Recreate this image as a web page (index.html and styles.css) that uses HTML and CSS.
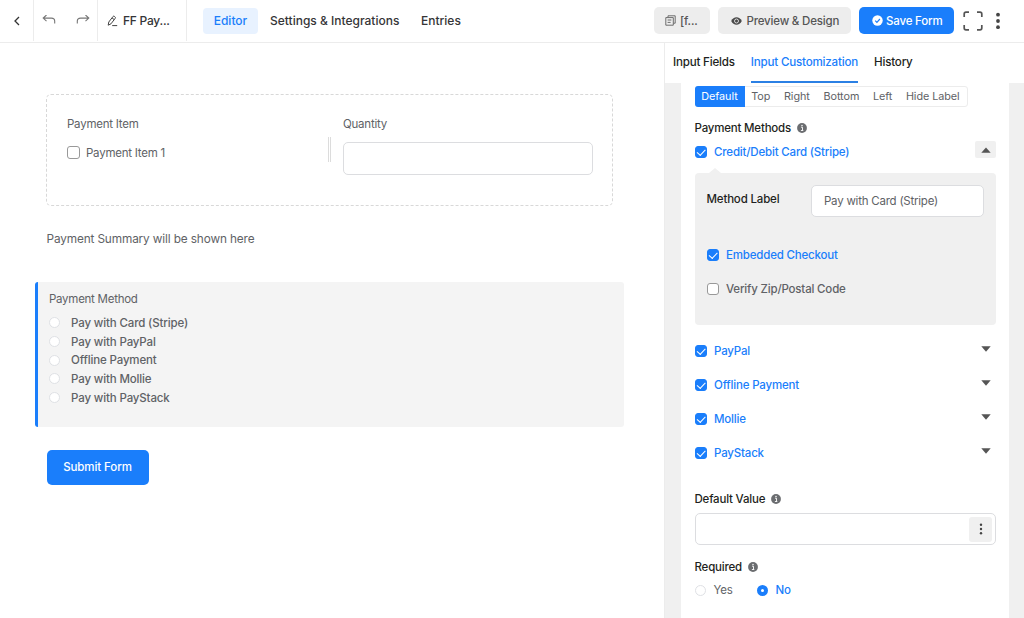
FILE: index.html
```html
<!DOCTYPE html>
<html lang="en">
<head>
<meta charset="utf-8">
<title>Form Editor</title>
<link rel="stylesheet" href="styles.css">
</head>
<body>
<svg class="defs" width="0" height="0">
  <symbol id="info" viewBox="0 0 10 10"><circle cx="5" cy="5" r="4.9" fill="#6b6d70"/><path d="M4 4.2h1.5v3.2M3.9 7.5h2.4" stroke="#fff" stroke-width=".9" fill="none"/><circle cx="5" cy="2.5" r=".75" fill="#fff"/></symbol>
  <symbol id="down" viewBox="0 0 10 6"><path d="M.3.2h9.4L5 5.8z" fill="#555"/></symbol>
</svg>
<header class="topbar">
  <div class="cell back"><svg width="8" height="12" viewBox="0 0 8 12"><path d="M6 2 2 6l4 4" fill="none" stroke="#333" stroke-width="1.3"/></svg></div>
  <div class="cell history">
    <svg width="14" height="11" viewBox="0 0 14 11"><path d="M4.5 0 1.2 3.1l3.3 3.1M1.4 3.1h8q3.3 0 3.3 3V8.500" fill="none" stroke="#777" stroke-width="1.1"/></svg>
    <svg width="14" height="11" viewBox="0 0 14 11"><path d="m9.5 0 3.3 3.1-3.3 3.1M12.6 3.1h-8q-3.3 0-3.3 3V8.500" fill="none" stroke="#777" stroke-width="1.1"/></svg>
  </div>
  <div class="cell name">
    <svg width="11" height="12" viewBox="0 0 11 12"><path d="M1.2 10.2 1.8 7 6 1.5q.6-.7 1.4-.1l.6.5q.8.6.2 1.4L4 8.8zM5 2.9l2.2 1.7M5.2 10.6h5" fill="none" stroke="#444" stroke-width="1"/></svg>
    <span>FF Pay...</span>
  </div>
  <nav class="nav"><a class="editor">Editor</a><a class="settings">Settings &amp; Integrations</a><a>Entries</a></nav>
  <div class="actions">
    <div class="btn code"><svg width="11" height="11" viewBox="0 0 11 11"><path d="M3 2.3V.8h7.2v7.4H8.5M.8 2.6h7.5v7.6H.8zM2.6 5h3.8M2.6 7.4h3" fill="none" stroke="#666" stroke-width=".95"/></svg><span>[f...</span></div>
    <div class="btn preview"><svg width="11" height="8" viewBox="0 0 11 8"><path d="M.2 4C1.5 1.5 3.3.3 5.5.3S9.5 1.5 10.8 4C9.5 6.5 7.7 7.7 5.5 7.7S1.5 6.5.2 4z" fill="#4a4a4a"/><circle cx="5.5" cy="4" r="2" fill="none" stroke="#e6e6e6" stroke-width=".9"/></svg><span>Preview &amp; Design</span></div>
    <div class="btn save"><svg width="11" height="11" viewBox="0 0 11 11"><circle cx="5.5" cy="5.5" r="5.2" fill="#fff"/><path d="m3.2 5.6 1.7 1.7 3-3.3" fill="none" stroke="#1a7efb" stroke-width="1.2"/></svg><span>Save Form</span></div>
    <svg class="full" width="20" height="20" viewBox="0 0 20 20"><path d="M1.2 6V3q0-1.800 1.800-1.800h3M14 1.200h3q1.800 0 1.800 1.800v3M18.800 14v3q0 1.800-1.800 1.800h-3M6 18.800H3q-1.800 0-1.800-1.800v-3" fill="none" stroke="#555" stroke-width="1.700"/></svg>
    <svg class="more" width="4" height="18" viewBox="0 0 4 18"><g fill="#444"><circle cx="2" cy="2.7" r="1.9"/><circle cx="2" cy="9" r="1.9"/><circle cx="2" cy="15.2" r="1.9"/></g></svg>
  </div>
</header>
<div class="body">
  <main class="canvas">
    <section class="container">
      <div class="col item"><div class="label">Payment Item</div><div class="choice"><i class="box large"></i><span>Payment Item 1</span></div></div>
      <div class="handle"></div>
      <div class="col quantity"><div class="label">Quantity</div><div class="input"></div></div>
    </section>
    <p class="summary">Payment Summary will be shown here</p>
    <section class="method">
      <div class="label">Payment Method</div>
      <div class="option"><i class="radio"></i><span>Pay with Card (Stripe)</span></div>
      <div class="option"><i class="radio"></i><span>Pay with PayPal</span></div>
      <div class="option"><i class="radio"></i><span>Offline Payment</span></div>
      <div class="option"><i class="radio"></i><span>Pay with Mollie</span></div>
      <div class="option"><i class="radio"></i><span>Pay with PayStack</span></div>
    </section>
    <div class="submit">Submit Form</div>
  </main>
  <aside class="sidebar">
    <div class="tabs"><a>Input Fields</a><a class="active">Input Customization</a><a>History</a></div>
    <div class="panel">
      <div class="segmented"><span class="on">Default</span><span>Top</span><span>Right</span><span>Bottom</span><span>Left</span><span>Hide Label</span></div>
      <div class="heading methods">Payment Methods<svg class="info"><use href="#info"/></svg></div>
      <div class="row first"><i class="box checked"></i><span>Credit/Debit Card (Stripe)</span><b class="toggle"><svg width="10" height="6" viewBox="0 0 10 6"><path d="M.3 5.8h9.4L5 .4z" fill="#555"/></svg></b></div>
      <div class="details">
        <div class="field"><label>Method Label</label><div class="text">Pay with Card (Stripe)</div></div>
        <div class="row embedded"><i class="box checked"></i><span>Embedded Checkout</span></div>
        <div class="row verify"><i class="box"></i><span>Verify Zip/Postal Code</span></div>
      </div>
      <div class="row closed"><i class="box checked"></i><span>PayPal</span><svg class="arrow"><use href="#down"/></svg></div>
      <div class="row closed"><i class="box checked"></i><span>Offline Payment</span><svg class="arrow"><use href="#down"/></svg></div>
      <div class="row closed"><i class="box checked"></i><span>Mollie</span><svg class="arrow"><use href="#down"/></svg></div>
      <div class="row closed"><i class="box checked"></i><span>PayStack</span><svg class="arrow"><use href="#down"/></svg></div>
      <div class="heading default">Default Value<svg class="info"><use href="#info"/></svg></div>
      <div class="value"><b><svg width="4" height="12" viewBox="0 0 4 12"><g fill="#444"><circle cx="2" cy="1.8" r="1.2"/><circle cx="2" cy="6" r="1.2"/><circle cx="2" cy="10.2" r="1.2"/></g></svg></b></div>
      <div class="heading required">Required<svg class="info"><use href="#info"/></svg></div>
      <div class="choices"><i class="radio"></i><span class="yes">Yes</span><i class="radio selected"></i><span class="no">No</span></div>
    </div>
  </aside>
</div>
</body>
</html>
```
FILE: styles.css
```css
* { box-sizing: border-box; }
body { margin: 0; width: 1024px; height: 618px; overflow: hidden; background: #fff; color: #606266; font: 400 11.5px/16px Inter, "Liberation Sans", sans-serif; }
svg { display: block; flex: none; }
.defs { position: absolute; }
i, b { display: block; flex: none; }
span, a, p { white-space: nowrap; }
.topbar { display: flex; height: 43px; padding-bottom: 2px; border-bottom: 1px solid #ececec; color: #353537; font-weight: 500; font-size: 12px; }
.cell { display: flex; align-items: center; height: 41px; border-right: 1px solid #ececec; }
.back { width: 34px; padding-left: 13px; }
.history { width: 64px; gap: 20px; padding-left: 8px; }
.name { width: 89px; padding-left: 9px; gap: 5px; letter-spacing: -.25px; }
.nav { display: flex; align-items: center; height: 41px; padding-left: 16px; }
.editor { width: 55px; height: 26px; line-height: 26px; text-align: center; background: #e8f2ff; color: #1a7efb; border-radius: 4px; margin-right: 12px; }
.settings { width: 151px; }
.actions { display: flex; align-items: center; margin-left: auto; height: 41px; padding-right: 24px; }
.btn { display: flex; align-items: center; height: 27px; border-radius: 5px; background: #ededed; color: #555; font-size: 11.5px; letter-spacing: -.18px; }
.code { width: 56px; padding-left: 11px; gap: 4px; margin-right: 8px; }
.preview { width: 133px; padding-left: 12.5px; gap: 5px; margin-right: 8px; }
.save { width: 95px; padding-left: 13px; gap: 3px; background: #1a7efb; color: #fff; margin-right: 9px; }
.more { margin-left: 13px; }
.body { display: flex; height: 575px; letter-spacing: -.18px; }
.canvas { width: 664px; padding: 51px 40px 0 35px; }
.container { display: flex; width: 567px; height: 112px; margin-left: 11px; padding: 21px 19px 0 20px; border: 1px dashed #d8d8d8; border-radius: 5px; letter-spacing: -.24px; }
.item { width: 261px; }
.choice { display: flex; align-items: center; gap: 6px; margin-top: 12.5px; }
.box { width: 12px; height: 12px; border: 1px solid #999; border-radius: 3px; background: #fff; }
.box.large { width: 13px; height: 13px; }
.handle { width: 3px; height: 25px; margin: 21px 12px 0 0; border: solid #dcdcdc; border-width: 0 1px; }
.quantity { width: 250px; }
.input { height: 33px; margin-top: 10px; border: 1px solid #dcdde0; border-radius: 5px; }
.summary { margin: 24.5px 0 0 11.5px; font-size: 11.8px; letter-spacing: -.13px; }
.method { width: 589px; height: 145px; margin-top: 35.5px; padding: 9px 11px 0; background: #f4f4f4; border-left: 3px solid #1a7efb; border-radius: 3px; }
.method .label { margin-bottom: 6.5px; letter-spacing: -.26px; }
.option { display: flex; align-items: center; height: 18.7px; gap: 11px; font-weight: 500; letter-spacing: -.14px; }
.radio { width: 11px; height: 11px; border: 1px solid #dfe1e5; border-radius: 50%; background: #fff; }
.submit { width: 102px; height: 35px; margin: 23px 0 0 11.5px; background: #1a7efb; border-radius: 5px; color: #fff; font-weight: 500; line-height: 35px; text-align: center; letter-spacing: -.1px; }
.sidebar { width: 360px; background: #f0f0f0; border-left: 1px solid #ececec; }
.tabs { display: flex; height: 40px; gap: 16px; padding-left: 8px; background: #fff; color: #1e1f21; font-weight: 500; font-size: 11.6px; letter-spacing: -.2px; line-height: 38px; }
.tabs .active { color: #1a7efb; border-bottom: 2px solid #2b80e4; }
.panel { width: 328px; height: 535px; margin-left: 16px; padding: 3px 13px 0 13.5px; background: #fff; }
.segmented { display: flex; width: 273px; height: 21px; border: 1px solid #ececec; border-radius: 3px; font-size: 10.8px; line-height: 19px; letter-spacing: -.05px; }
.segmented span { flex: auto; text-align: center; }
.segmented .on { flex: none; width: 50px; height: 21px; line-height: 21px; margin: -1px 0 0 -1px; background: #1a7efb; color: #fff; border-radius: 3px 0 0 3px; }
.heading { display: flex; align-items: center; color: #1e1f21; font-weight: 500; height: 16px; letter-spacing: -.2px; }
.info { width: 10px; height: 10px; margin-left: 6px; }
.methods { margin-top: 13px; }
.row { display: flex; align-items: center; gap: 7.5px; color: #1a7efb; font-weight: 500; height: 16px; }
.checked { border-color: #1a7efb; background: #1a7efb; display: flex; align-items: center; justify-content: center; }
.checked::after { content: ""; width: 7px; height: 3.5px; margin-top: -2px; border: solid #fff; border-width: 0 0 1px 1px; transform: rotate(-47deg); }
.first { margin-top: 8px; }
.toggle { display: flex; align-items: center; justify-content: center; width: 21px; height: 17px; margin: -5px 0 0 auto; background: #f0f0f0; border-radius: 2px; }
.details { position: relative; height: 152px; margin: 13px 0 18px; padding: 12px; background: #f0f0f0; border-radius: 4px; }
.details::before { content: ""; position: absolute; left: 14px; top: -5px; border: solid transparent; border-width: 0 6px 5px; border-bottom-color: #f0f0f0; }
.field { display: flex; justify-content: space-between; color: #1e1f21; font-weight: 500; line-height: 28px; }
.text { width: 173px; height: 32px; padding-left: 12px; background: #fff; border: 1px solid #dcdde0; border-radius: 5px; line-height: 30px; color: #606266; font-weight: 400; letter-spacing: -.23px; }
.embedded { margin-top: 30px; }
.verify { margin-top: 18px; color: #606266; }
.closed { margin-bottom: 18px; }
.arrow { width: 10px; height: 6px; margin: -4px 5.5px 0 auto; }
.default { margin-top: 30px; }
.value { display: flex; align-items: center; justify-content: flex-end; height: 32px; margin-top: 6px; padding-right: 3px; border: 1px solid #dcdde0; border-radius: 5px; }
.value b { display: flex; align-items: center; justify-content: center; width: 23px; height: 25px; background: #f0f0f0; border-radius: 3px; }
.required { margin-top: 14px; }
.choices { display: flex; align-items: center; margin-top: 7px; font-weight: 500; }
.yes { width: 43px; margin-left: 8px; font-weight: 400; }
.no { margin-left: 8px; color: #1a7efb; }
.radio.selected { border: 4px solid #1a7efb; }
```
